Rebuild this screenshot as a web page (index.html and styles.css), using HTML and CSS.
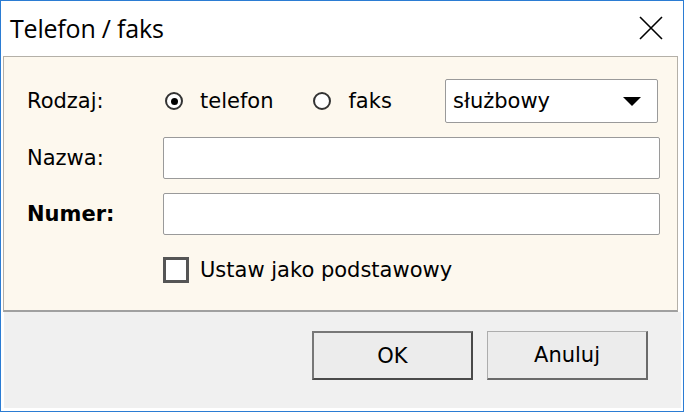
FILE: index.html
```html
<!DOCTYPE html>
<html lang="pl">
<head>
<meta charset="utf-8">
<title>Telefon / faks</title>
<link rel="stylesheet" href="styles.css">
</head>
<body>
<div class="window">
  <div class="titlebar">
    <span class="title">Telefon / faks</span>
    <span class="close">
      <svg width="24" height="24" viewBox="0 0 24 24"><path d="M1 1 L23 23 M23 1 L1 23" stroke="#000" stroke-width="1.6" fill="none"/></svg>
    </span>
  </div>
  <div class="panel">
    <div class="row row-type">
      <span class="label">Rodzaj:</span>
      <div class="controls">
        <span class="radio checked"><span class="dot"></span></span>
        <span class="radio-text">telefon</span>
        <span class="radio"></span>
        <span class="radio-text">faks</span>
        <div class="select">
          <span class="select-text">służbowy</span>
          <span class="arrow"></span>
        </div>
      </div>
    </div>
    <div class="row">
      <span class="label">Nazwa:</span>
      <div class="input"></div>
    </div>
    <div class="row">
      <span class="label bold">Numer:</span>
      <div class="input"></div>
    </div>
    <div class="row row-check">
      <span class="label"></span>
      <span class="checkbox"></span>
      <span class="check-text">Ustaw jako podstawowy</span>
    </div>
  </div>
  <div class="footer">
    <div class="button default">OK</div>
    <div class="button">Anuluj</div>
  </div>
</div>
</body>
</html>
```
FILE: styles.css
```css
html, body {
  margin: 0;
  padding: 0;
  background: #ffffff;
}
.window {
  width: 684px;
  height: 412px;
  box-sizing: border-box;
  border: 1px solid #2b7cd3;
  background: #ffffff;
  display: flex;
  flex-direction: column;
  font-family: "DejaVu Sans", sans-serif;
  font-size: 21px;
  color: #000;
}
.titlebar {
  height: 55px;
  display: flex;
  align-items: center;
  padding-left: 9px;
  padding-right: 20px;
  flex-shrink: 0;
}
.title {
  font-family: "Open Sans", sans-serif;
  font-size: 25px;
  letter-spacing: -0.2px;
  margin-top: -2px;
}
.close {
  margin-left: auto;
  width: 24px;
  height: 24px;
  display: flex;
  margin-top: -1px;
}
.panel {
  margin: 0 5px 0 2px;
  background: #fdf8ee;
  border: 1px solid #b4b0a8;
  border-bottom: 2px solid #a0a0a0;
  padding: 22px 17px 27px 23px;
  display: flex;
  flex-direction: column;
  gap: 14px;
}
.row {
  display: flex;
  align-items: center;
}
.label {
  width: 136px;
  flex-shrink: 0;
}
.bold {
  font-weight: bold;
}
.row-type {
  height: 44px;
}
.controls {
  flex: 1;
  display: flex;
  align-items: center;
}
.radio {
  width: 18px;
  height: 18px;
  box-sizing: border-box;
  border: 2px solid #333;
  border-radius: 50%;
  margin-left: 2px;
  display: flex;
  align-items: center;
  justify-content: center;
  background: #fff;
}
.dot {
  width: 7px;
  height: 7px;
  border-radius: 50%;
  background: #000;
}
.radio-text {
  margin-left: 17px;
  margin-right: 38px;
}
.select {
  margin-left: auto;
  margin-right: 2px;
  width: 213px;
  height: 44px;
  box-sizing: border-box;
  border: 1px solid #9a9a9a;
  border-radius: 2px;
  background: #fff;
  display: flex;
  align-items: center;
  padding-left: 7px;
  padding-right: 16px;
}
.arrow {
  margin-left: auto;
  width: 0;
  height: 0;
  border-left: 9px solid transparent;
  border-right: 9px solid transparent;
  border-top: 9px solid #000;
}
.input {
  flex: 1;
  height: 42px;
  box-sizing: border-box;
  border: 1px solid #9a9a9a;
  border-radius: 2px;
  background: #fff;
}
.row-check {
  margin-top: 8px;
}
.checkbox {
  width: 26px;
  height: 26px;
  box-sizing: border-box;
  border: 3px solid #555;
  background: #fff;
}
.check-text {
  margin-left: 11px;
}
.footer {
  flex: 1;
  margin: 0 2px 3px 2px;
  background: #f0f0f0;
  border-left: 1px solid #fff;
  display: flex;
  justify-content: flex-end;
  align-items: flex-start;
  gap: 14px;
  padding: 19px 33px 0 0;
}
.button {
  width: 161px;
  height: 49px;
  box-sizing: border-box;
  border: 1px solid #adadad;
  border-right: 2px solid #6a6a6a;
  border-bottom: 2px solid #6a6a6a;
  background: #ececec;
  display: flex;
  align-items: center;
  justify-content: center;
}
.button.default {
  border: 2px solid #4a4a4a;
  border-top-color: #777;
  border-left-color: #777;
}
```
